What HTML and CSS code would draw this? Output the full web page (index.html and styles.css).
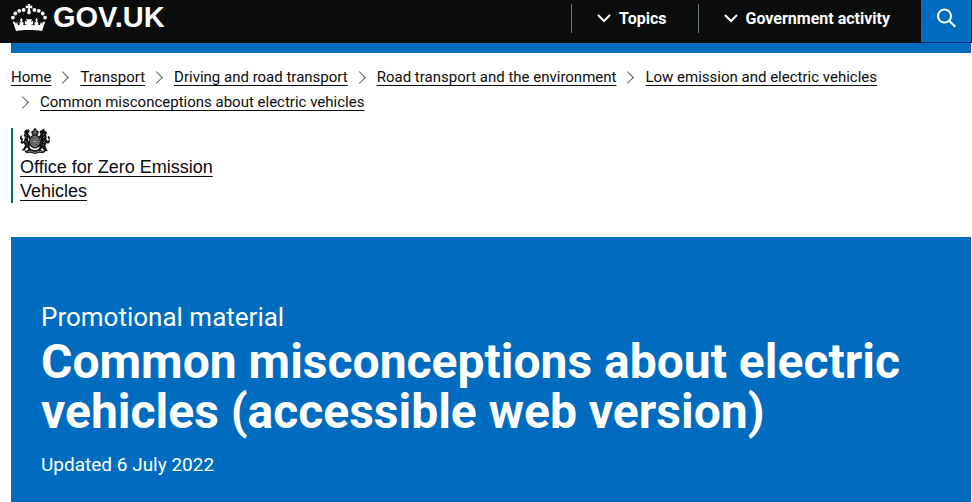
FILE: index.html
```html
<!DOCTYPE html>
<html lang="en">
<head>
  <meta charset="UTF-8">
  <meta name="viewport" content="width=device-width, initial-scale=1">
  <title>Common misconceptions about electric vehicles (accessible web version) - GOV.UK</title>
  <link rel="stylesheet" href="styles.css">
</head>
<body>

  <header class="header">
    <a class="logo" href="#" aria-label="GOV.UK home">
      <svg class="crown" viewBox="0 0 36 28" aria-hidden="true" fill="currentColor">
        <path d="M16.7 0h2.6l-.6 2.1 2.6-.7v3.2l-2.6-.7 1 4c.3 1.5-.5 2.4-1.7 2.4s-2-.9-1.7-2.4l1-4-2.6.7V1.4l2.6.7z"/>
        <circle cx="12.6" cy="6" r="1.9"/><circle cx="8.2" cy="6.8" r="1.9"/><circle cx="4.3" cy="9.5" r="1.9"/><circle cx="1.9" cy="13.6" r="1.9"/>
        <circle cx="23.4" cy="6" r="1.9"/><circle cx="27.8" cy="6.8" r="1.9"/><circle cx="31.7" cy="9.5" r="1.9"/><circle cx="34.1" cy="13.6" r="1.9"/>
        <path d="M5 27 1.7 17.3l2.9 1.1.3 2.4 1-3.4 1.2 3.9 1.8-.5c-1-2 .3-3.2 1.3-2.6-1.4-1.4-1.2-3 .1-4.1 1.5 1.1 1.6 2.7.5 4.1 1.3-.5 2.3.8 1.4 2.7 1.5.8 3.3.3 4-.8l-2.3.3v-3.6l2.3 1.1-1.2-2.7h6l-1.2 2.7 2.3-1.1v3.6l-2.3-.3c.7 1.1 2.5 1.6 4 .8-.9-1.9.1-3.2 1.4-2.7-1.1-1.4-1-3 .5-4.1 1.3 1.1 1.5 2.7.1 4.1 1-.6 2.3.6 1.3 2.6l1.8.5 1.2-3.9 1 3.4.3-2.4 2.9-1.1L31 27c-8-1.2-18-1.2-26 0z"/>
      </svg>
      <span class="logo-text">GOV.UK</span>
    </a>
    <nav class="menu" aria-label="Main">
      <button class="menu-button" type="button">
        <svg class="chevron" viewBox="0 0 14 9" aria-hidden="true"><path d="M1 1l6 6 6-6"/></svg>
        Topics
      </button>
      <button class="menu-button" type="button">
        <svg class="chevron" viewBox="0 0 14 9" aria-hidden="true"><path d="M1 1l6 6 6-6"/></svg>
        Government activity
      </button>
      <button class="search-button" type="button" aria-label="Search GOV.UK">
        <svg class="search-icon" viewBox="0 0 20 20" aria-hidden="true"><circle cx="8.5" cy="8" r="6.5"/><path d="M13.2 12.7l6 6"/></svg>
      </button>
    </nav>
  </header>

  <div class="wrapper">
    <div class="blue-bar"></div>

    <nav aria-label="Breadcrumb">
      <ol class="breadcrumbs">
        <li><a href="#">Home</a></li>
        <li><a href="#">Transport</a></li>
        <li><a href="#">Driving and road transport</a></li>
        <li><a href="#">Road transport and the environment</a></li>
        <li><a href="#">Low emission and electric vehicles</a></li>
        <li><a href="#">Common misconceptions about electric vehicles</a></li>
      </ol>
    </nav>

    <div class="organisation">
      <svg class="crest" viewBox="0 0 30 26" aria-hidden="true">
        <!-- crown -->
        <path d="M14.4 0h1.2v1h1v1h-1v.8c1.6-.7 3.4.1 3.1 1.8L18 6.8h-6l-.7-2.2c-.3-1.7 1.5-2.5 3.1-1.8V2h-1V1h1z"/>
        <path class="crest-line" d="M12.6 4.8h4.8M15 3v3"/>
        <!-- lion -->
        <path d="M6.2 1.2l1.5.7.8-.6 1.1 1.1-.3 2.1-1.1.9 1.9 3 .9 2.8-1.6-.2-1-1.8-.2 3.3 2.3 2.9-1 3.5 1.5 2-.4 2-3.5.2.3-1.2 1.2-.5-1.7-2.1-2.5 3.1-2.4.2.2-1.3 1.1-.4L5 17.3 3.6 15 1.8 16 .4 14.2l1.2-1.7L0 10.7l.4-2.6 1.8-.8-.6 2.2 1.5 1.6-.8 2.4 1.7-.6.9-3.8L3.6 7l1.1-1.5-.6-1.8z"/>
        <path class="crest-line" d="M5.5 6.2l1.7 1.2M5.2 9l1.7.8M4.8 13.3l2.3 1.2M6.3 17.4l1.1-1"/>
        <!-- unicorn -->
        <path d="M24.7.4l-.5 2 2.2 1.1.7 2-1.1 1.3.8 2.4-.6 1.8 1.6 2.2 1.1-1.7-1.2-2 .5-2 1.8 2-.5 2.2.5 1.7-1.7 2.4-1.9-.7-.9 2.1.3 2.4 1.7 2.6-.1 1.1-2.7-.4-2.6-3-1.6 2 1.5.7.1 1.1-3.6-.2-.4-2 1.5-2-1.1-3.4 2.4-3-.3-3.3-1.1 1.9-1.6.1.9-2.8 1.9-3-1-1 .1-2.1 1.5-.6z"/>
        <path class="crest-line" d="M24.4 5.7l-1.5 1.5M25 8.4l-2 1.4M25.1 13.5l-2.2 1M23.8 17.4l-1.1-1"/>
        <!-- shield -->
        <ellipse cx="15" cy="13.5" rx="6" ry="7"/>
        <ellipse class="crest-garter" cx="15" cy="13.5" rx="4.4" ry="5.4"/>
        <path class="crest-line" d="M15 9v9M11.6 13.5h6.8M12.4 11.3h1.6M16 15.6h1.8M17 10.3v2M13 15v2"/>
        <!-- compartment and motto -->
        <path d="M4 22.4l4.2.3 3.4-1.5 3.4 1 3.4-1 3.4 1.5 4.2-.3-2.5 2.9-4.3-.6L15 26l-4.2-1.3-4.3.6z"/>
        <path class="crest-line" d="M7.3 24l3.5-.8 4.2 1.3 4.2-1.3 3.5.8"/>
      </svg>
      <a href="#">Office for Zero Emission Vehicles</a>
    </div>

    <main class="banner">
      <p class="context">Promotional material</p>
      <h1>Common misconceptions about electric vehicles (accessible web version)</h1>
      <p class="updated">Updated 6 July 2022</p>
    </main>
  </div>

</body>
</html>
```

FILE: styles.css
```css
* {
  box-sizing: border-box;
}

body {
  margin: 0;
  font-family: Roboto, Arial, sans-serif;
  font-size: 15px;
  line-height: 25px;
  color: #0b0c0c;
  background: #fff;
}

a {
  color: inherit;
  text-decoration-thickness: 1px;
  text-underline-offset: 3px;
  text-decoration-skip-ink: none;
}

/* Header */
.header {
  display: flex;
  justify-content: space-between;
  height: 43px;
  padding: 0 1px 0 11px;
  background: #0b0c0c;
  color: #fff;
}

.logo {
  display: flex;
  align-items: center;
  gap: 6px;
  padding-bottom: 8px;
  text-decoration: none;
}

.crown {
  width: 36px;
  height: 28px;
}

.logo-text {
  font-family: "Liberation Sans", Arial, sans-serif;
  font-size: 29px;
  font-weight: bold;
}

.menu {
  display: flex;
}

.menu-button {
  display: flex;
  align-items: center;
  gap: 8px;
  height: 29px;
  margin-top: 4px;
  padding: 0 31px 0 25px;
  border: 0;
  border-left: 1px solid #6f777b;
  background: none;
  color: #fff;
  font-family: inherit;
  font-size: 16px;
  font-weight: bold;
}

.chevron {
  width: 14px;
  height: 9px;
  fill: none;
  stroke: #fff;
  stroke-width: 2;
}

.search-button {
  width: 50px;
  padding: 0 0 6px;
  border: 0;
  border-bottom: 1px solid #003078;
  background: #006cbf;
}

.search-icon {
  display: block;
  width: 20px;
  height: 20px;
  margin: 0 auto;
  fill: none;
  stroke: #fff;
  stroke-width: 2;
}

/* Page */
.wrapper {
  padding: 0 1px 0 11px;
}

.blue-bar {
  height: 10px;
  background: #006cbf;
}

.breadcrumbs {
  display: flex;
  flex-wrap: wrap;
  margin: 0;
  padding: 12px 0 0;
  list-style: none;
}

.breadcrumbs li {
  display: flex;
  align-items: center;
}

.breadcrumbs li + li::before {
  content: "";
  width: 8px;
  height: 8px;
  margin: 0 13px 0 7px;
  border: solid #505a5f;
  border-width: 1px 1px 0 0;
  transform: rotate(45deg);
}

.organisation {
  width: 25%;
  margin: 13px 0 34px;
  padding-left: 7px;
  border-left: 2px solid #00705a;
  font-family: "Liberation Sans", Arial, sans-serif;
  font-size: 18px;
  line-height: 24px;
}

.crest {
  display: block;
  width: 30px;
  height: 26px;
  margin-bottom: 1px;
  fill: #111;
}

.crest-line {
  fill: none;
  stroke: #ccc;
  stroke-width: 0.6;
}

.crest-garter {
  fill: #444;
  stroke: #bbb;
  stroke-width: 0.6;
}

/* Title banner */
.banner {
  min-height: calc(100vh - 237px);
  padding: 64px 30px 24px;
  background: #006cbf;
  color: #fff;
}

.banner h1 {
  margin: 4px 0 15px;
  font-size: 48px;
  line-height: 50px;
}

.banner p {
  margin: 0;
}

.banner .context {
  font-size: 26px;
  line-height: 32px;
}

.banner .updated {
  font-size: 19px;
  line-height: 25px;
}
```
